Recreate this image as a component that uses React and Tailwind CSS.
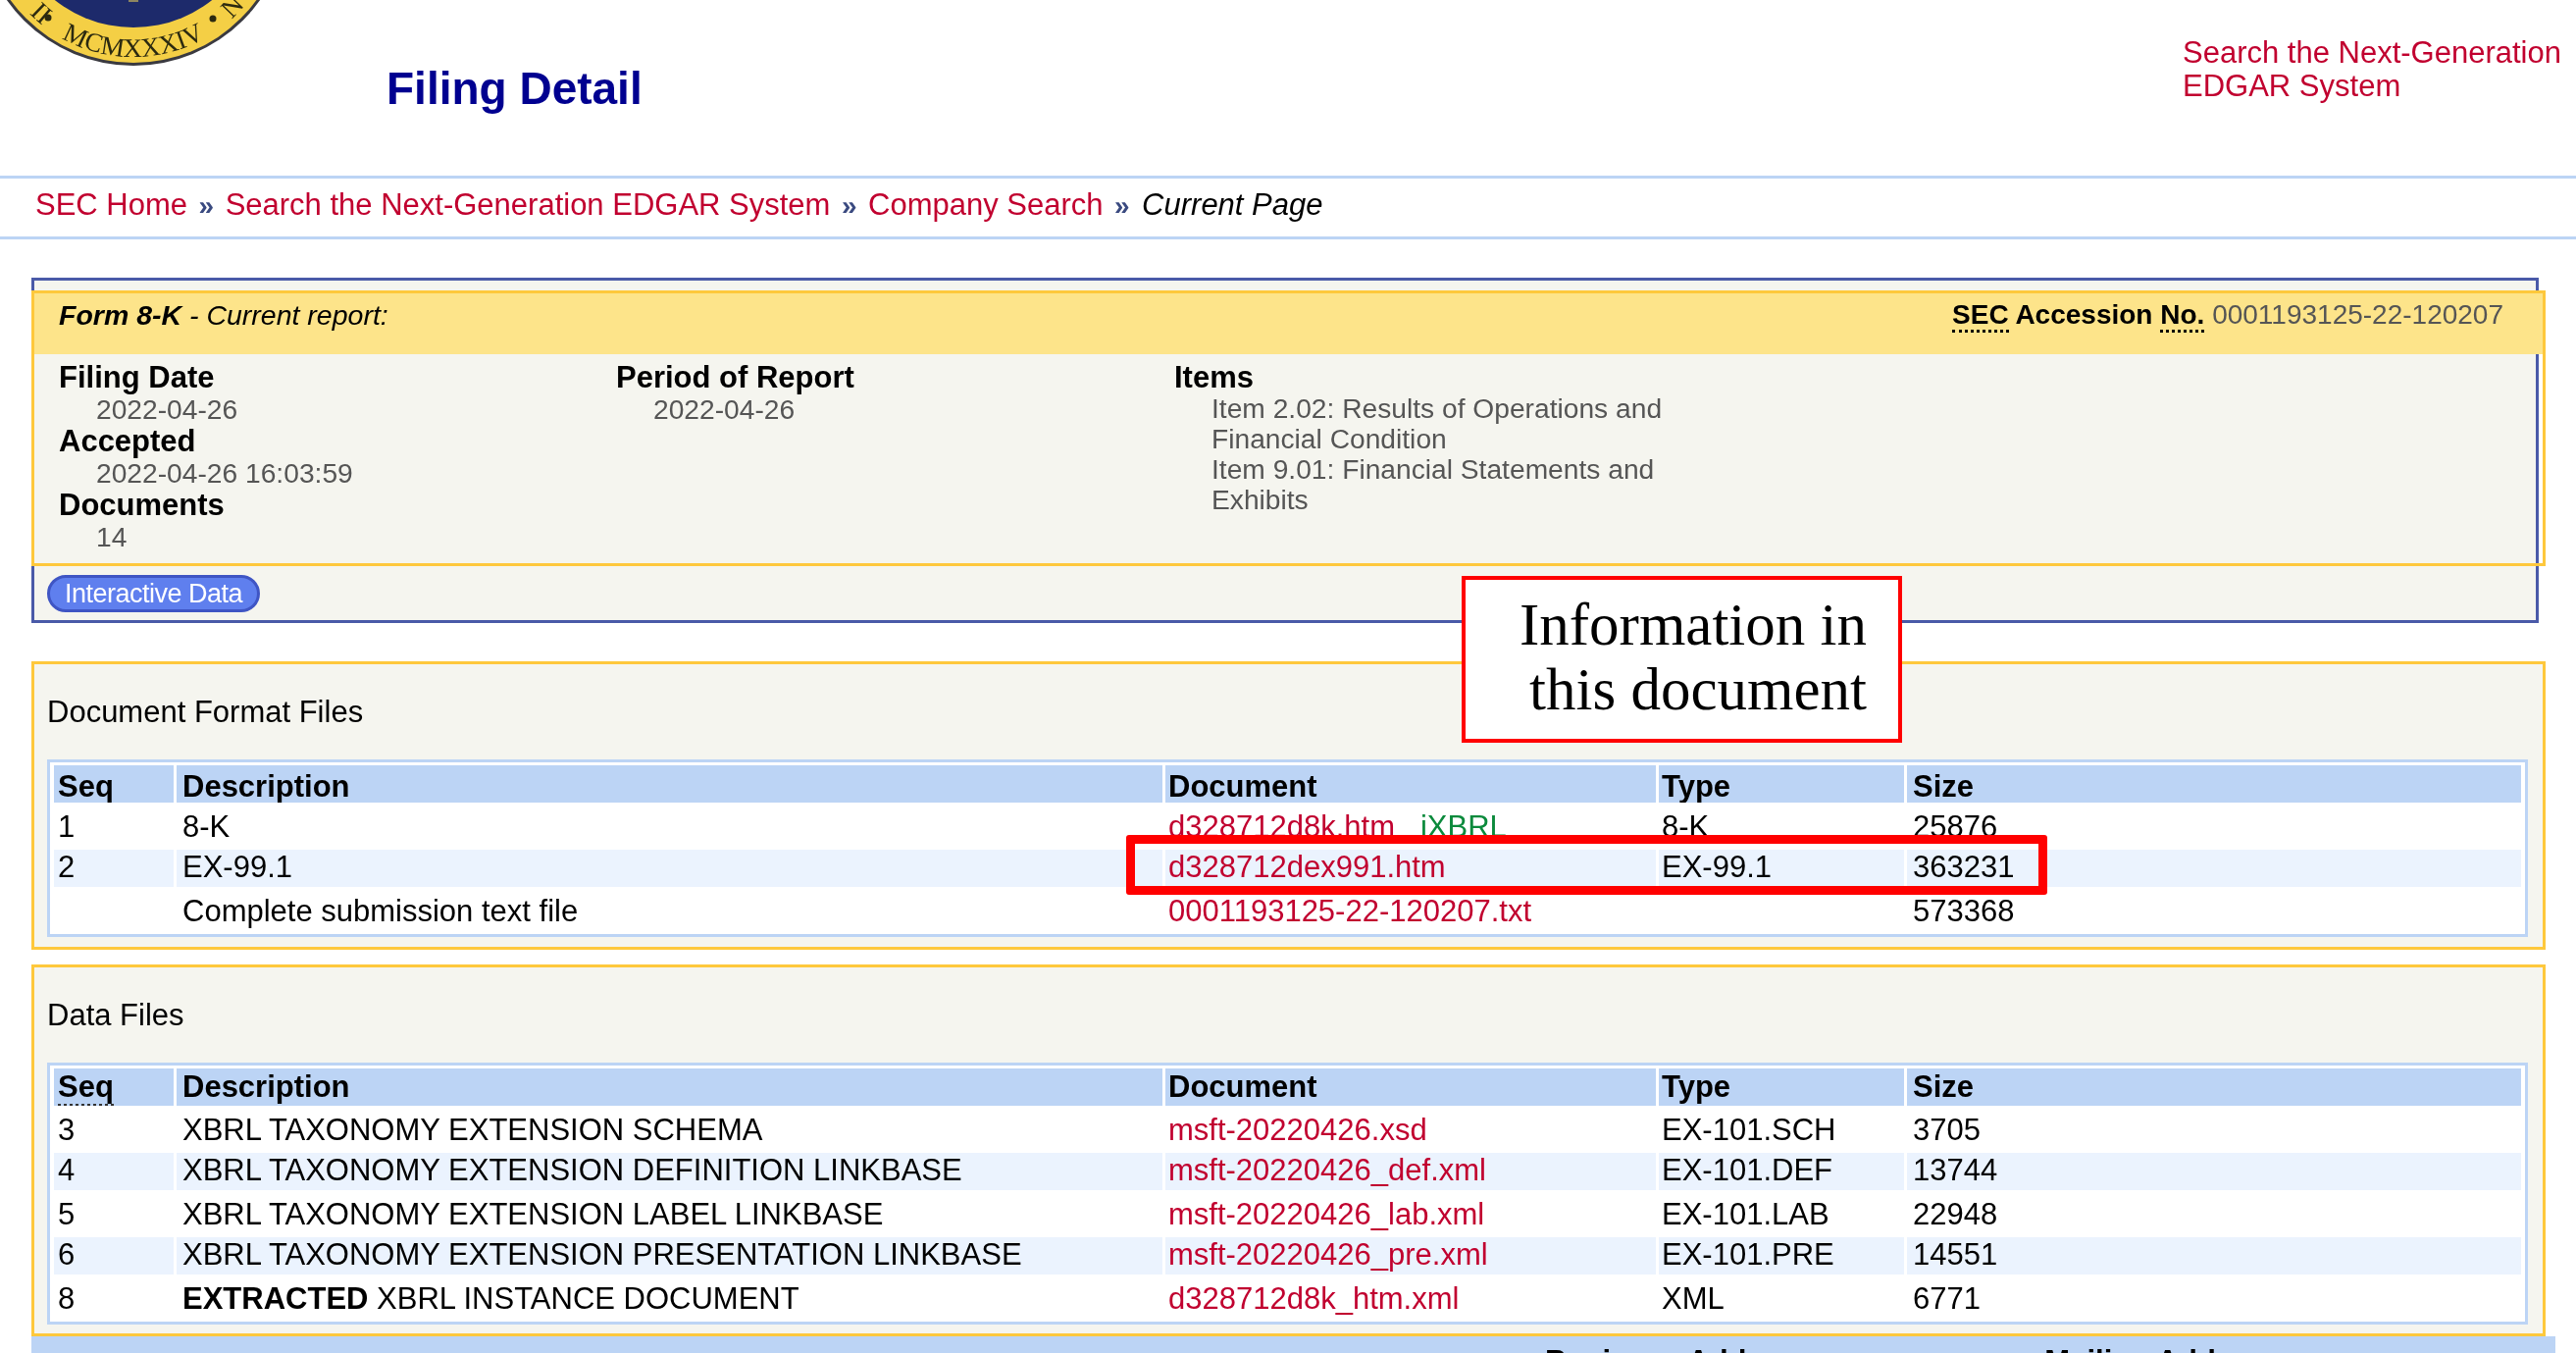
const LINK = "text-[#c1002f]";

const formatFiles = [
  { seq: "1", desc: "8-K", doc: "d328712d8k.htm", xbrl: true, type: "8-K", size: "25876" },
  { seq: "2", desc: "EX-99.1", doc: "d328712dex991.htm", type: "EX-99.1", size: "363231" },
  { seq: "", desc: "Complete submission text file", doc: "0001193125-22-120207.txt", type: "", size: "573368" },
];

const dataFiles = [
  { seq: "3", desc: "XBRL TAXONOMY EXTENSION SCHEMA", doc: "msft-20220426.xsd", type: "EX-101.SCH", size: "3705" },
  { seq: "4", desc: "XBRL TAXONOMY EXTENSION DEFINITION LINKBASE", doc: "msft-20220426_def.xml", type: "EX-101.DEF", size: "13744" },
  { seq: "5", desc: "XBRL TAXONOMY EXTENSION LABEL LINKBASE", doc: "msft-20220426_lab.xml", type: "EX-101.LAB", size: "22948" },
  { seq: "6", desc: "XBRL TAXONOMY EXTENSION PRESENTATION LINKBASE", doc: "msft-20220426_pre.xml", type: "EX-101.PRE", size: "14551" },
  {
    seq: "8",
    desc: (
      <span>
        <strong className="font-bold">EXTRACTED</strong> XBRL INSTANCE DOCUMENT
      </span>
    ),
    doc: "d328712d8k_htm.xml",
    type: "XML",
    size: "6771",
  },
];

const ROW = "grid grid-cols-[122px_1005px_500px_250px_626px] gap-x-[3px]";

const Seal = () => (
  <svg viewBox="0 0 272 72" className="w-[272px] h-[72px] shrink-0 block blur-[0.7px]">
    <circle cx="136" cy="-91" r="158" fill="#3a3a40" />
    <circle cx="136" cy="-91" r="155" fill="#f4cf45" />
    <circle cx="136" cy="-101" r="129" fill="#1d2a6b" />
    <rect x="131" y="0" width="10" height="2" fill="#8d8560" />
    <circle cx="49" cy="18" r="3.5" fill="#2c2a10" />
    <circle cx="217" cy="19" r="3.5" fill="#2c2a10" />
    <path id="sealArc" d="M -13 -91 A 149 149 0 0 0 285 -91" fill="none" />
    <text fontFamily="'Liberation Serif', serif" fontSize="27" fill="#2c2a10">
      <textPath href="#sealArc" startOffset="50%" textAnchor="middle">
        MCMXXXIV
      </textPath>
    </text>
    <text fontFamily="'Liberation Serif', serif" fontSize="27" fill="#2c2a10">
      <textPath href="#sealArc" startOffset="26.7%" textAnchor="middle">
        II
      </textPath>
    </text>
    <text fontFamily="'Liberation Serif', serif" fontSize="27" fill="#2c2a10">
      <textPath href="#sealArc" startOffset="75.5%" textAnchor="middle">
        N
      </textPath>
    </text>
  </svg>
);

const Label = ({ children }) => <div className="font-bold text-[31px] leading-[33px] text-black">{children}</div>;

const Value = ({ children }) => (
  <div className="pl-[38px] text-[28.2px] leading-[32px] text-[#555555]">{children}</div>
);

const FileTable = ({ files, headerClass }) => (
  <div className="mx-[13px] w-[2529px] border-[3px] border-[#bcd4f5] bg-white px-[4px] pt-[3px]">
    <div className={`${ROW} font-bold text-[31px] text-black ${headerClass}`}>
      <div className="h-[38px] bg-[#bcd4f5] pl-[4px]">
        <abbr className="no-underline border-b-[3px] border-dotted border-[#333333]">Seq</abbr>
      </div>
      <div className="h-[38px] bg-[#bcd4f5] pl-[6px]">Description</div>
      <div className="h-[38px] bg-[#bcd4f5] pl-[3px]">Document</div>
      <div className="h-[38px] bg-[#bcd4f5] pl-[3px]">Type</div>
      <div className="h-[38px] bg-[#bcd4f5] pl-[6px]">Size</div>
    </div>
    {files.map((file, i) => {
      const even = i % 2 === 1;
      const row = even
        ? "h-[38px] bg-[#ebf3fe] flex items-center pb-[1px]"
        : "h-[48px] bg-white flex items-center pt-[3px]";
      return (
        <div key={i} className={`${ROW} text-[31px] text-black`}>
          <div className={`${row} pl-[4px]`}>{file.seq}</div>
          <div className={`${row} pl-[6px]`}>{file.desc}</div>
          <div className={`${row} pl-[3px] ${LINK}`}>
            {file.doc}
            {file.xbrl && <span className="ml-[26px] text-[#0b8a3c]">iXBRL</span>}
          </div>
          <div className={`${row} pl-[3px]`}>{file.type}</div>
          <div className={`${row} pl-[6px]`}>{file.size}</div>
        </div>
      );
    })}
  </div>
);

const Section = ({ title, files, className, headerClass }) => (
  <div className={`ml-[32px] w-[2563px] border-[3px] border-[#fec83c] bg-[#f5f5ef] ${className}`}>
    <div className="h-[97px] flex items-center pl-[13px] pt-[2px] text-[31px] text-black">{title}</div>
    <FileTable files={files} headerClass={headerClass} />
  </div>
);

const Crumb = () => <span className="mx-[11.5px] text-[#3a4a80] text-[28px] font-bold">»</span>;

export default function App() {
  return (
    <div
      className="relative h-[1379px] w-[2626px] overflow-hidden bg-white"
      style={{ fontFamily: "'Liberation Sans', Arial, sans-serif" }}
    >
      <div className="blur-[0.6px]">
        {/* top bar */}
        <div className="flex h-[179px]">
          <Seal />
          <h1 className="ml-[122px] mt-[66px] text-[46px] leading-[48px] font-bold text-[#000090]">Filing Detail</h1>
          <div className={`ml-auto mr-[15px] mt-[37px] text-[31px] leading-[34px] ${LINK}`}>
            Search the Next-Generation
            <br />
            EDGAR System
          </div>
        </div>

        {/* breadcrumbs */}
        <div className="flex h-[65px] items-center border-y-[3px] border-[#bcd4f5] pb-[4px] pl-[36px] text-[31px]">
          <span className={LINK}>SEC Home</span>
          <Crumb />
          <span className={LINK}>Search the Next-Generation EDGAR System</span>
          <Crumb />
          <span className={LINK}>Company Search</span>
          <Crumb />
          <span className="ml-[1px] italic text-black">Current Page</span>
        </div>

        {/* filing summary */}
        <div className="ml-[32px] mt-[39px] h-[352px] w-[2556px] border-[3px] border-[#4a5aa8] bg-[#f5f5ef]">
          <div className="-ml-[3px] mt-[10px] w-[2563px] border-[3px] border-[#fec83c]">
            <div className="flex h-[62px] items-center justify-between bg-[#fde48a] pb-[18px] pl-[25px] pr-[40px] text-[28px]">
              <div className="italic text-[28.5px] text-black">
                <strong className="font-bold">Form 8-K</strong> - Current report:
              </div>
              <div className="text-[#555555]">
                <strong className="font-bold text-black">
                  <abbr className="no-underline border-b-[3px] border-dotted border-black">SEC</abbr> Accession{" "}
                  <abbr className="no-underline border-b-[3px] border-dotted border-black">No.</abbr>
                </strong>{" "}
                0001193125-22-120207
              </div>
            </div>
            <div className="flex h-[213px] pl-[25px] pt-[7px]">
              <div className="w-[568px]">
                <Label>Filing Date</Label>
                <Value>2022-04-26</Value>
                <Label>Accepted</Label>
                <Value>2022-04-26 16:03:59</Value>
                <Label>Documents</Label>
                <Value>14</Value>
              </div>
              <div className="w-[569px]">
                <Label>Period of Report</Label>
                <Value>2022-04-26</Value>
              </div>
              <div className="w-[520px]">
                <Label>Items</Label>
                <div className="pl-[38px] text-[28.2px] leading-[31px] text-[#555555]">
                  Item 2.02: Results of Operations and
                  <br />
                  Financial Condition
                  <br />
                  Item 9.01: Financial Statements and
                  <br />
                  Exhibits
                </div>
              </div>
            </div>
          </div>
          <div className="ml-[13px] mt-[9px] flex h-[38px] w-[217px] items-center justify-center rounded-full border-[3px] border-[#3f55c4] bg-[#5f7fee] text-[27px] tracking-[-0.5px] text-white">
            Interactive Data
          </div>
        </div>

        <Section
          title="Document Format Files"
          files={formatFiles}
          className="mt-[39px] pb-[10px]"
          headerClass="leading-[44px]"
        />
        <Section title="Data Files" files={dataFiles} className="mt-[15px] pb-[9px]" headerClass="leading-[38px]" />

        {/* footer, cut off by the bottom of the picture */}
        <div className="ml-[32px] flex h-[60px] w-[2573px] bg-[#bcd4f5] pt-[3px] text-[31px] font-bold text-black">
          <div className="ml-[1543px]">Business Address</div>
          <div className="ml-[240px]">Mailing Address</div>
        </div>
      </div>

      {/* annotation laid over the screenshot */}
      <div
        className="absolute left-[1490px] top-[587px] h-[170px] w-[449px] border-[4px] border-[#ff0000] bg-white pr-[32px] pt-[13px] text-right text-[61px] leading-[66px] text-black"
        style={{ fontFamily: "'Liberation Serif', serif" }}
      >
        Information in
        <br />
        this document
      </div>
      <div className="absolute left-[1148px] top-[851px] h-[61px] w-[939px] rounded-[3px] border-[9px] border-[#ff0000]" />
    </div>
  );
}
